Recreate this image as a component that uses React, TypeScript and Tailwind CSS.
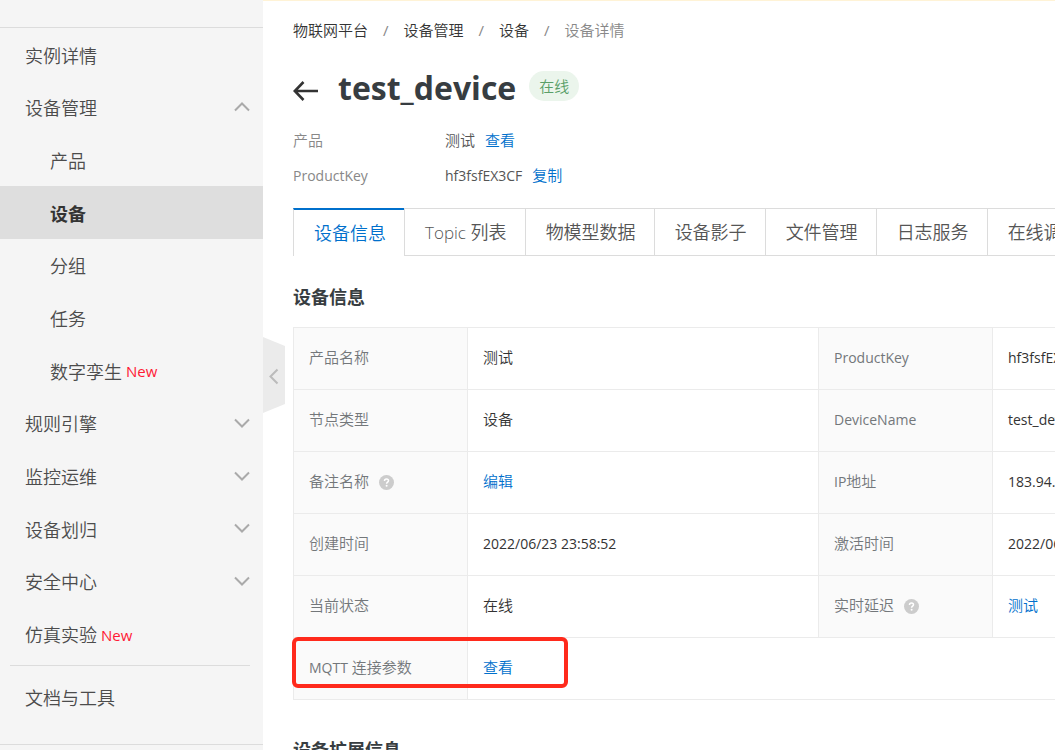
import type { ReactNode } from 'react';
import clsx from 'clsx';

// ── Data ───────────────────────────────────────────────────────────────────────
type NavItem = {
  label: string;
  child?: boolean;
  active?: boolean;
  isNew?: boolean;
  arrow?: 'up' | 'down';
};

const NAV: NavItem[] = [
  { label: '实例详情' },
  { label: '设备管理', arrow: 'up' },
  { label: '产品', child: true },
  { label: '设备', child: true, active: true },
  { label: '分组', child: true },
  { label: '任务', child: true },
  { label: '数字孪生', child: true, isNew: true },
  { label: '规则引擎', arrow: 'down' },
  { label: '监控运维', arrow: 'down' },
  { label: '设备划归', arrow: 'down' },
  { label: '安全中心', arrow: 'down' },
  { label: '仿真实验', isNew: true },
];

const CRUMBS = ['物联网平台', '设备管理', '设备'];

const TABS: ReactNode[] = [
  '设备信息',
  <><span className="text-[17px]">Topic</span> 列表</>,
  '物模型数据',
  '设备影子',
  '文件管理',
  '日志服务',
  '在线调试',
];

// ── Small pieces ───────────────────────────────────────────────────────────────
function Latin({ children }: { children: ReactNode }) {
  return <span className="text-sm leading-[inherit] font-normal">{children}</span>;
}

function TextLink({ children }: { children: ReactNode }) {
  return <a href="#" className="text-[#0070cc]">{children}</a>;
}

function Chevron({ up }: { up?: boolean }) {
  return (
    <svg width="16" height="10" viewBox="0 0 16 10" fill="none" stroke="#aaaaaa" strokeWidth="2">
      <path d={up ? 'M1 8.5 8 1.5 15 8.5' : 'M1 1.5 8 8.5 15 1.5'} />
    </svg>
  );
}

function Help() {
  return (
    <button type="button" aria-label="帮助" className="ml-[10px] align-middle">
      <svg width="15" height="15" viewBox="0 0 15 15" className="block">
        <circle cx="7.5" cy="7.5" r="7.5" fill="#cccccc" />
        <path d="M5.5 6c0-1.3.8-2.1 2-2.1s2 .8 2 1.8c0 1.3-1.9 1.5-1.9 3" fill="none" stroke="#fff" strokeWidth="1.5" />
        <circle cx="7.6" cy="10.8" r="1" fill="#fff" />
      </svg>
    </button>
  );
}

function Row({ children }: { children: ReactNode }) {
  return <tr className="h-[62px]">{children}</tr>;
}

function Label({ children }: { children: ReactNode }) {
  return (
    <th scope="row" className="border-r border-b border-[#ebebeb] bg-[#fafafa] px-[15px] pb-[3px] text-left font-[350] text-[#73777a]">
      {children}
    </th>
  );
}

function Value({ children, span }: { children: ReactNode; span?: number }) {
  return (
    <td colSpan={span} className="border-r border-b border-[#ebebeb] px-[15px] pb-[3px] text-[#333]">
      {children}
    </td>
  );
}

// ── Sidebar ────────────────────────────────────────────────────────────────────
function Sidebar() {
  return (
    <aside className="relative w-[263px] shrink-0 bg-[#f5f5f5] text-lg text-[#4c4c4c]">
      <div className="h-7 border-b border-[#dcdcdc]" />
      <nav>
        <ul className="grid h-[632px] auto-rows-fr">
          {NAV.map(item => (
            <li key={item.label} className={clsx('grid', item.active && 'bg-[#dedede] font-bold text-[#333]')}>
              <a
                href="#"
                className={clsx('flex items-center pt-[3px] pr-[13px]', item.child ? 'pl-[50px]' : 'pl-[25px]')}
              >
                {item.label}
                {item.isNew && <span className="ml-1 text-[15px] font-normal text-[#ff1a36]">New</span>}
                {item.arrow && <span className="mb-[3px] ml-auto"><Chevron up={item.arrow === 'up'} /></span>}
              </a>
            </li>
          ))}
        </ul>
        <hr className="mt-[5px] mr-[13px] ml-[10px] border-[#dcdcdc]" />
        <a href="#" className="flex h-[79px] items-center border-b border-[#dcdcdc] pb-[14px] pl-[25px]">文档与工具</a>
      </nav>

      {/* Collapse handle hanging off the edge */}
      <button type="button" aria-label="收起菜单" className="absolute top-[337px] left-full z-10">
        <svg width="22" height="76" viewBox="0 0 22 76" className="block">
          <path d="M0 0 22 9V67L0 76Z" fill="#ebebeb" />
          <path d="M14.5 32.5 7.500 39.500l7 7" fill="none" stroke="#bbbbbb" strokeWidth="2" />
        </svg>
      </button>
    </aside>
  );
}

// ── Page ───────────────────────────────────────────────────────────────────────
export default function App() {
  return (
    <div className="flex h-screen overflow-hidden bg-white font-['Open_Sans','Noto_Sans_CJK_SC',sans-serif] font-[350]">
      <Sidebar />

      <main className="min-w-0 flex-1 overflow-hidden border-t border-[#fff3d6] pl-[30px] text-[15px] leading-5">
        <nav className="mt-[19px] flex gap-[15px] text-[#333]">
          {CRUMBS.map(crumb => (
            <span key={crumb} className="flex gap-[15px]">
              <a href="#">{crumb}</a>
              <span className="font-normal text-[#888]">/</span>
            </span>
          ))}
          <span className="text-[#888]">设备详情</span>
        </nav>

        <header className="mt-6 flex h-12 items-center">
          <button type="button" aria-label="返回" className="mt-[6px] mr-5">
            <svg width="25" height="20" viewBox="0 0 25 20" fill="none" stroke="#333" strokeWidth="2.6" className="block">
              <path d="M1.500 10H25M10.500 1 1.800 10 10.500 19" />
            </svg>
          </button>
          <h1 className="text-[32px] leading-[48px] font-bold text-[#373d41]">test_device</h1>
          <span className="mb-1 ml-[13px] rounded-full bg-[#ebf5ec] px-[10px] py-[5px] text-[#5a9f68]">在线</span>
        </header>

        <dl className="mt-[11px] grid grid-cols-[152px_1fr] text-[#555] leading-[35px]">
          <dt className="text-[#888]">产品</dt>
          <dd className="flex gap-[10px]">测试 <TextLink>查看</TextLink></dd>
          <dt className="text-[#888]"><Latin>ProductKey</Latin></dt>
          <dd className="flex gap-[10px]"><Latin>hf3fsfEX3CF</Latin> <TextLink>复制</TextLink></dd>
        </dl>

        <div role="tablist" className="mt-[15px] flex h-12 text-lg whitespace-nowrap text-[#555]">
          {TABS.map((tab, i) => (
            <button
              key={i}
              type="button"
              role="tab"
              aria-selected={i === 0}
              className={clsx(
                'shrink-0 border-l border-l-[#dcdcdc] pr-[18px] pl-5',
                i === 0 ? 'border-t-2 border-t-[#0070cc] text-[#0070cc]' : 'border-y border-y-[#dcdcdc]',
              )}
            >
              {tab}
            </button>
          ))}
        </div>

        <h2 className="mt-[27px] text-lg leading-7 font-bold text-[#373d41]">设备信息</h2>

        <div className="relative mt-4">
          <table className="w-full min-w-[1051px] table-fixed border-separate border-spacing-0 border-t border-l border-[#ebebeb]">
            <colgroup>
              <col className="w-[174px]" />
              <col />
              <col className="w-[174px]" />
              <col />
            </colgroup>
            <tbody>
              <Row>
                <Label>产品名称</Label>
                <Value>测试</Value>
                <Label><Latin>ProductKey</Latin></Label>
                <Value><Latin>hf3fsfEX3CF</Latin></Value>
              </Row>
              <Row>
                <Label>节点类型</Label>
                <Value>设备</Value>
                <Label><Latin>DeviceName</Latin></Label>
                <Value><Latin>test_device</Latin></Value>
              </Row>
              <Row>
                <Label>备注名称<Help /></Label>
                <Value><TextLink>编辑</TextLink></Value>
                <Label><Latin>IP</Latin>地址</Label>
                <Value><Latin>183.94.</Latin></Value>
              </Row>
              <Row>
                <Label>创建时间</Label>
                <Value><Latin>2022/06/23 23:58:52</Latin></Value>
                <Label>激活时间</Label>
                <Value><Latin>2022/06/23 23:58:52</Latin></Value>
              </Row>
              <Row>
                <Label>当前状态</Label>
                <Value>在线</Value>
                <Label>实时延迟<Help /></Label>
                <Value><TextLink>测试</TextLink></Value>
              </Row>
              <Row>
                <Label><Latin>MQTT</Latin> 连接参数</Label>
                <Value span={3}><TextLink>查看</TextLink></Value>
              </Row>
            </tbody>
          </table>

          {/* Highlight around the MQTT row */}
          <div className="pointer-events-none absolute bottom-3 -left-px h-[51px] w-[276px] rounded-md border-4 border-[#ff2a1c]" />
        </div>

        <h2 className="mt-9 text-lg leading-7 font-bold text-[#373d41]">设备扩展信息</h2>
      </main>
    </div>
  );
}
